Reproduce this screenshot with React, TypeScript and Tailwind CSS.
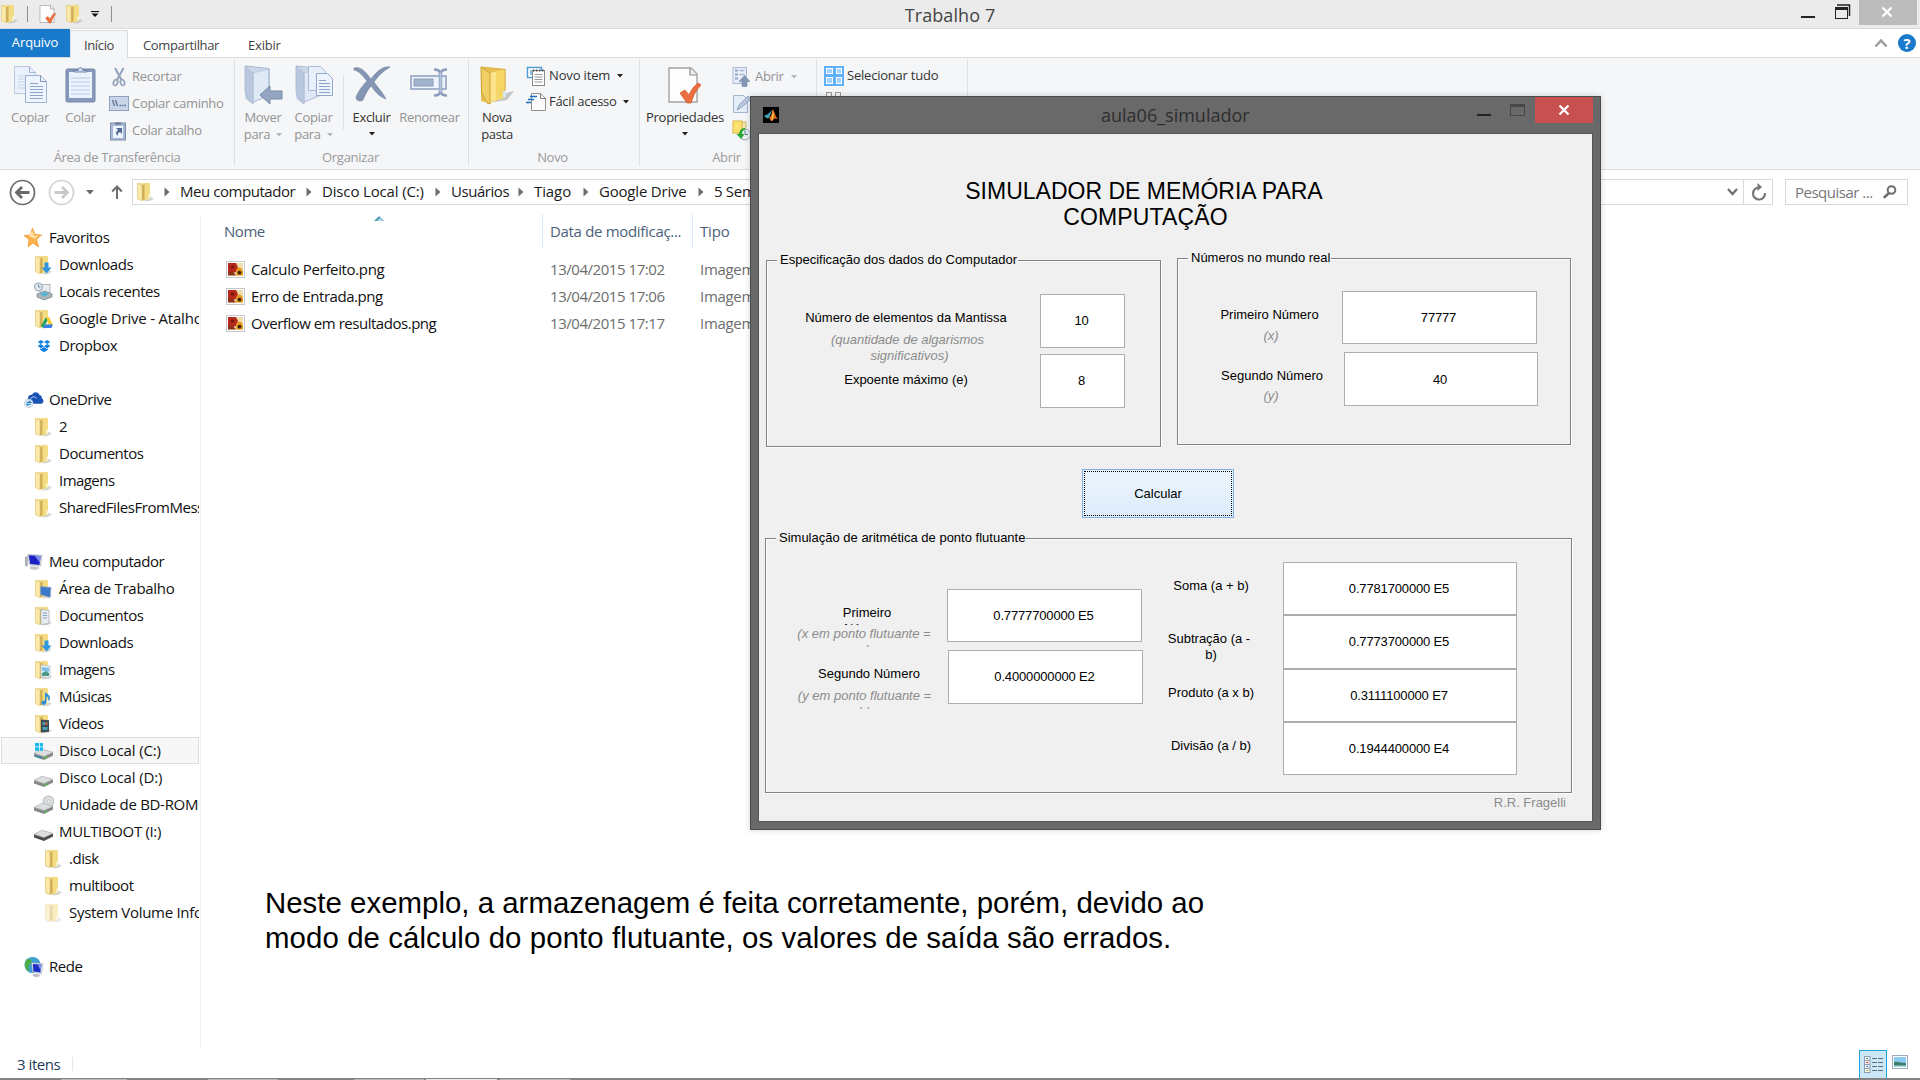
import type { ReactNode } from "react";

/* ---------- icons ---------- */

function Folder({ faded = false, children }: { faded?: boolean; children?: ReactNode }) {
  return (
    <svg width="20" height="20" viewBox="0 0 20 20" className={faded ? "opacity-50" : ""}>
      <path d="M13 14l5 2.500-4 2.500-6 .5z" fill="#b9b9b4" opacity=".6" />
      <path d="M1.500 1.200 12 .8l2 .8v14.800l-7 2.200-5.500-1.600z" fill="#f3dc8c" />
      <path d="M6 3.200 9.500 2.300v15.300L6 18.600z" fill="#cfae56" />
      <path d="M8.500 2.500 13.800 1.500v15.200l-5.300 1.500z" fill="#f4dc83" />
      <path d="M1.500 1.200 6 3v15.800l-4.500-2z" fill="#f9e9aa" stroke="#dfc373" strokeWidth=".6" />
      <path d="M12.300 12.500h2v3.700l-2 .6z" fill="#f9f3d8" />
      {children}
    </svg>
  );
}

function BigFolder() {
  return (
    <svg width="38" height="40" viewBox="0 0 38 40">
      <path d="M20 30 36 26l-7 9-13 2z" fill="#8a8a8a" opacity=".45" />
      <path d="M3 2 27 4.500v28L12 38 3 36z" fill="#e6c050" />
      <path d="M12 8 27 4.500v28l-15 5z" fill="#fbe48c" />
      <path d="M18 6.500 26 5v27l-8 3z" fill="#f5d565" />
      <path d="M3 2l9 6v31l-3-1L3.500 27z" fill="#f0cf66" stroke="#cfa030" strokeWidth="1" />
      <path d="M3 2 27 4.500v28" fill="none" stroke="#d9ac3c" strokeWidth="1.200" />
      <path d="M25 26h3v6l-3 1z" fill="#d7e6ef" />
    </svg>
  );
}

function PaleFolder({ children }: { children?: ReactNode }) {
  return (
    <svg width="40" height="40" viewBox="0 0 40 40">
      <path d="M2 1 27 4v27L10 38 2 34z" fill="#ccd7e8" />
      <path d="M10 8 26 4v26l-16 7z" fill="#dfe8f5" stroke="#b4c3da" strokeWidth=".8" />
      <path d="M2 1l8 7v31l-4-3L2 27z" fill="#b9c8de" stroke="#a7b7d0" strokeWidth=".8" />
      <path d="M2 1 26 3.500V30" fill="none" stroke="#a7b7d0" />
      {children}
    </svg>
  );
}

function CheckPage({ size = 40 }: { size?: number }) {
  return (
    <svg width={size} height={size} viewBox="0 0 40 40">
      <path d="M4 3h22l6 6v28H4z" fill="#fdfdfd" stroke="#a3a3a3" strokeWidth="1.400" />
      <path d="M25 3v7h7" fill="#eee" stroke="#8f8f8f" strokeWidth="1.200" />
      <path d="M15 28l5-3 4 5c2-5 5-9 9-12l3 2c-5 5-8 11-10 18h-4z" fill="#ea7040" stroke="#d05a2c" strokeWidth=".8" />
    </svg>
  );
}

function CopyIcon() {
  return (
    <svg width="36" height="40" viewBox="0 0 36 40" className="ml-0.5">
      <path d="M1.500 1.500h15l6 6v21h-21z" fill="#e9f1fc" stroke="#b9c9e2" />
      <path d="M16.500 1.500v6h6" fill="none" stroke="#a4b6d3" />
      <path d="M5 11h8M5 14h8M5 17h8M5 20h8M5 23h8" stroke="#c6d3e8" />
      <path d="M12.500 10.500h15l6 6v21h-21z" fill="#edf4fe" stroke="#9fb2d1" />
      <path d="M27.500 10.500v6h6" fill="none" stroke="#7f95b9" />
      <path d="M17 18.500h8M17 21.500h13M17 24.500h13M17 27.500h13M17 30.500h13M17 33.500h13" stroke="#8fa4c8" />
    </svg>
  );
}

function PasteIcon() {
  return (
    <svg width="34" height="40" viewBox="0 0 34 40">
      <rect x="2" y="4" width="29" height="33" rx="1.500" fill="#8699ba" stroke="#7487aa" />
      <rect x="5" y="7" width="23" height="26" fill="#eaf2fd" />
      <path d="M7 13h19M7 17h19M7 21h19M7 25h19M7 29h19" stroke="#b9c9e2" />
      <path d="M10 7V5.500h4c0-2 1-3 2.500-3s2.500 1 2.500 3h4V7z" fill="#cbd7ea" stroke="#7487aa" />
    </svg>
  );
}

function ScissorsIcon() {
  return (
    <svg width="20" height="20" viewBox="0 0 20 20" fill="none" stroke="#92a3be">
      <path d="M6 1l6.500 12M14.500 1 8 13" strokeWidth="2" />
      <ellipse cx="6.500" cy="15.500" rx="2" ry="3" strokeWidth="1.700" transform="rotate(20 6.500 15.500)" />
      <ellipse cx="13.500" cy="15.500" rx="2" ry="3" strokeWidth="1.700" transform="rotate(-20 13.500 15.500)" />
    </svg>
  );
}

function PathIcon() {
  return (
    <svg width="20" height="16" viewBox="0 0 20 16">
      <rect x=".5" y=".5" width="19" height="14" fill="#cad6e8" stroke="#8ea1c0" />
      <path d="M3.500 4l2 6M6.500 4l2 6" stroke="#576c90" strokeWidth="1.200" />
      <path d="M10.500 9.500h1.500M13 9.500h1.500M15.500 9.500h1.500" stroke="#576c90" strokeWidth="1.500" />
    </svg>
  );
}

function ShortcutPasteIcon() {
  return (
    <svg width="20" height="20" viewBox="0 0 20 20">
      <rect x="1.500" y="2" width="15" height="17" fill="#a9b8d2" stroke="#7d90b2" />
      <rect x="4" y="5" width="10" height="12" fill="#eef4fd" />
      <path d="M6 2.500h6" stroke="#62779c" strokeWidth="2" />
      <path d="M7 7h6v6l-2-2c-2 1-2.500 2-2.500 4-2-2-2-4 .5-6z" fill="#53698f" />
    </svg>
  );
}

function DeleteIcon() {
  return (
    <svg width="40" height="38" viewBox="0 0 40 38">
      <path d="M2 3c8-2 12 5 17 11C25 6 31 1 38 2 31 6 26 11 22 17c5 7 9 11 12 17-8-3-11-8-15-13-4 5-6 9-8 14-3 2-7 1-7-3 3-7 7-12 11-16C11 11 7 6 2 5z" fill="#8496b4" stroke="#72849f" strokeWidth=".6" />
    </svg>
  );
}

function RenameIcon() {
  return (
    <svg width="40" height="36" viewBox="0 0 40 36">
      <rect x="1" y="11" width="35" height="13" fill="#eef4fd" stroke="#8a9dbd" strokeWidth="1.500" />
      <rect x="4" y="14" width="19" height="7" fill="#a3b2cc" stroke="#8a9dbd" />
      <path d="M24 4.500c4 0 6 1 6 4v18c0 3-2 4-6 4M37 4.500c-4 0-6 1-6 4v18c0 3 2 4 6 4" fill="none" stroke="#8a9dbd" strokeWidth="2.500" />
      <path d="M30.500 7.500v20" stroke="#b5c3db" strokeWidth="2" />
    </svg>
  );
}

function NewItemIcon() {
  return (
    <svg width="20" height="20" viewBox="0 0 20 20">
      <rect x="1.500" y="1.500" width="14" height="10" fill="#fff" stroke="#4a9ad4" strokeWidth="1.400" />
      <path d="M4 4h5v5H4z" fill="#8cc4ea" />
      <rect x="6.500" y="4.500" width="12" height="15" fill="#fff" stroke="#8a8a8a" />
      <path d="M7 4.500h11" stroke="#555" strokeDasharray="1.500 1.500" strokeWidth="2" />
      <path d="M8.500 8.500h8M8.500 11h8M8.500 13.500h8M8.500 16h8" stroke="#999" />
    </svg>
  );
}

function EasyAccessIcon() {
  return (
    <svg width="21" height="20" viewBox="0 0 21 20">
      <path d="M5.500 1.500h9l5 5v12h-14z" fill="#fbfbfb" stroke="#909090" />
      <path d="M14.500 1.500v5h5" fill="none" stroke="#808080" />
      <path d="M4 4.500h7M2 7.500h6M0 10.500h5" stroke="#1f6fc0" strokeWidth="1.500" />
    </svg>
  );
}

function OpenIcon() {
  return (
    <svg width="20" height="21" viewBox="0 0 20 21">
      <rect x="1" y="1.500" width="13.500" height="16" fill="#e9eff8" stroke="#a9b9d4" />
      <path d="M3 4.500h3M3 8.500h3M3 12.500h3" stroke="#8fa3c6" strokeWidth="2" />
      <path d="M7.500 4.500h5M7.500 8.500h5" stroke="#a9b9d4" strokeWidth="1.500" />
      <path d="M12.500 9.500l5.500 6h-3v5h-5v-5H7z" fill="#8496b6" stroke="#7286a8" strokeWidth=".6" />
    </svg>
  );
}

function EditIcon() {
  return (
    <svg width="20" height="20" viewBox="0 0 20 20">
      <path d="M1.500 1.500h10l4 4v13h-14z" fill="#e4ecf8" stroke="#a4b5d2" />
      <path d="M5 16l2-5 9-9 3 3-9 8z" fill="#b9c8df" stroke="#8598ba" strokeWidth=".8" />
    </svg>
  );
}

function HistoryIcon() {
  return (
    <svg width="20" height="21" viewBox="0 0 20 21">
      <rect x="6" y="2" width="8" height="11" fill="#f2e6b0" stroke="#d0b968" />
      <rect x="1" y="1" width="9" height="12" fill="#fbe26f" stroke="#d9b540" />
      <circle cx="13" cy="14.500" r="5.500" fill="#e9eef2" stroke="#96a5b0" />
      <path d="M13 10.500v4h3" fill="none" stroke="#5a7a8a" />
      <path d="M13 8c-4 0-6 3-5.500 6H4.500l4.500 5 3.500-5H10c0-2 1-4 3-4z" fill="#27a82f" />
    </svg>
  );
}

function SelectAllIcon() {
  return (
    <div className="grid size-5 shrink-0 grid-cols-2 gap-[3px] bg-[#61b0fb] p-0.5">
      {[0, 1, 2, 3].map((k) => (
        <div key={k} className="border border-white bg-[#a5d2fc]" />
      ))}
    </div>
  );
}

function DriveIcon({ kind = "plain" }: { kind?: "plain" | "win" | "disc" | "dark" }) {
  return (
    <svg width="20" height="20" viewBox="0 0 20 20">
      {kind === "disc" && <circle cx="14.500" cy="6.500" r="5.500" fill="#d9dde0" stroke="#a8a8a8" strokeWidth=".8" />}
      {kind === "disc" && <circle cx="14.500" cy="6.500" r="1.500" fill="#fff" stroke="#999" strokeWidth=".5" />}
      <path d="M0 12.500 8 8.500l11 3v3L10 19 0 15.500z" fill={kind === "dark" ? "#4c4c4c" : "#85898a"} />
      <path d="M0 12.300 8 8.200l11 3.100-9 4.200z" fill="#dcdedf" stroke="#a9acad" strokeWidth=".6" />
      {kind !== "dark" && <path d="M10.500 16l2.500-1v2l-2.500 1z" fill="#4cbc3c" />}
      {kind === "win" && <path d="M1 14l7 2.500V18l-7-2.500z" fill="#2b84a8" />}
      {kind === "win" && <path d="M1 2h4v3.500H1zM5.800 2H9v3.500H5.800zM1 6.300h4v3.500H1zM5.800 6.300H9v3.500H5.800z" fill="#17b9f0" />}
    </svg>
  );
}

function StarIcon() {
  return (
    <svg width="20" height="20" viewBox="0 0 20 20">
      <path d="M8.500 0l2.500 6.500 6.500.500-5 4.500 2 7.500L9 15l-5 4 1-7.500L0 7.500l6.500-.500z" fill="#fbb04a" stroke="#e9932c" strokeWidth=".7" />
      <path d="M8.500 2.500l1.700 5 4.500.300-3.700 3-6-2.500z" fill="#fde0a0" />
    </svg>
  );
}

function RecentIcon() {
  return (
    <svg width="20" height="20" viewBox="0 0 20 20">
      <rect x="6" y="2.500" width="10" height="8" fill="#e8edf0" stroke="#9aa8b0" strokeWidth=".8" />
      <path d="M3 12l8-3 7 3v3l-8 3-7-3z" fill="#a9b4bb" stroke="#76848e" strokeWidth=".7" />
      <path d="M6 12l5-2 4 2-5 2.500z" fill="#52b3d6" />
      <circle cx="4.500" cy="5" r="4" fill="#dfe9ef" stroke="#8ea3b2" />
      <path d="M4.500 2.500V5h2" fill="none" stroke="#5a7286" strokeWidth=".8" />
    </svg>
  );
}

function DropboxIcon() {
  return (
    <svg width="20" height="20" viewBox="0 0 20 20" fill="#1081de">
      <path d="M7 4l3 2-3.300 2.100L3.700 6zM13 4l3.300 2-3 2.100L10 6zM3.700 10l3-2L10 10.200l-3 2zM13.300 8l3 2-3.300 2.200-3-2zM6 12.500l1 .6 3-2 3 2 1-.6v1.200l-4 2.500-4-2.500z" />
    </svg>
  );
}

function OneDriveIcon() {
  return (
    <svg width="21" height="20" viewBox="0 0 21 20">
      <path d="M4 9c0-3 2-5 4.500-4.500C10 1 15 1 16.500 5c2 0 2.500 2 2.200 3.500C21 9 21 14 18 14H5c-3 0-3.500-4-1-5z" fill="#1853b5" />
      <path d="M7 9c1-3 5-3 6-.5" fill="none" stroke="#fff" strokeWidth=".8" />
      <circle cx="5" cy="13.500" r="4.500" fill="#dceaf3" stroke="#a9bccb" strokeWidth=".6" />
      <path d="M3 12.500h4l-1.500-1.500M7 14.500H3L4.500 16" fill="none" stroke="#1e7fcb" strokeWidth="1.200" />
    </svg>
  );
}

function ComputerIcon() {
  return (
    <svg width="21" height="20" viewBox="0 0 21 20">
      <path d="M1 5l3-1.500V15l-3-1z" fill="#aab1b6" />
      <path d="M4 2l15 .8-1.500 11.500L5.500 13z" fill="#dcdfe4" stroke="#a9adb5" strokeWidth=".6" />
      <path d="M5 3l12.500.6-1.200 9.500L6.500 12z" fill="#1820c4" />
      <path d="M11 3.300l6.500.300-1 7z" fill="#7d8cf0" />
      <path d="M7 14.500l8 .5 1 2-5 1.500-5-1.500z" fill="#c4c7cb" />
    </svg>
  );
}

function NetworkIcon() {
  return (
    <svg width="21" height="22" viewBox="0 0 21 22">
      <circle cx="9" cy="9" r="8.500" fill="#3d9fd2" />
      <path d="M3 3c3-1 6 0 5 3S4 9 5 12s0 4-1 3C0 11 0 6 3 3z" fill="#4aae45" />
      <path d="M8 6.500l12 .8-1.500 11L9 16.500z" fill="#e0e3e8" stroke="#a4a9b3" strokeWidth=".5" />
      <path d="M9.300 7.800l9 .6-1.100 8.300-7.400-1z" fill="#1c2ec4" />
      <path d="M14 8.100l4.300.3-.8 6z" fill="#7d8cf0" />
      <path d="M10 18l6 1 1 1.500-4 1.200-4-1.500z" fill="#b9bcc1" />
    </svg>
  );
}

function ImageFileIcon() {
  return (
    <svg width="19" height="17" viewBox="0 0 19 17">
      <rect x=".5" y=".5" width="18" height="16" fill="#fff" stroke="#c4c8cb" />
      <rect x="2" y="2" width="15" height="12.500" fill="#f0dfae" />
      <path d="M2 2h8l2 4-2 5-3 1-5-1z" fill="#b5281a" />
      <path d="M2 10.500 7 11l3 3.500H2z" fill="#8c3418" />
      <circle cx="6.500" cy="6" r="1.600" fill="#6a1a0c" />
      <path d="M10.500 8.500l1.500-2 3 .5 2 2.500v5h-7z" fill="#e3991f" />
      <circle cx="13.500" cy="11.700" r="1.900" fill="#3a220c" />
    </svg>
  );
}

function MatlabIcon() {
  return (
    <svg width="16" height="16" viewBox="0 0 16 16" className="bg-black">
      <path d="M1 9l4-2 4-4-3 8-2 .5z" fill="#3e9fb5" />
      <path d="M9.500 2c2 2 3 8 5.500 10-2-.5-3-1-4 0s-2 3-3 2-1-2.500-2-3c2-2 3-4 3.500-9z" fill="#e2601c" />
      <path d="M10 3c1 4 1 6 0 9l-2 2 1-5z" fill="#f7c64a" />
    </svg>
  );
}

function CloseGlyph() {
  return (
    <svg width="12" height="10" viewBox="0 0 12 10">
      <path d="M1.500.5 10.500 9.500M10.500.5 1.500 9.500" stroke="#fff" strokeWidth="2.200" />
    </svg>
  );
}

function Caret({ muted = false }: { muted?: boolean }) {
  return (
    <svg width="6" height="4" viewBox="0 0 6 4" className="shrink-0">
      <path d="M0 0h6L3 3.500z" fill={muted ? "#b4b7ba" : "#222"} />
    </svg>
  );
}

/* ---------- explorer ---------- */

function TitleBar() {
  return (
    <div className="relative flex h-[29px] shrink-0 border-b border-[#d9dadb] bg-[#ebebeb]">
      <div className="flex h-7 items-center">
        <Folder />
        <div className="ml-[7px] h-4 w-px bg-[#8f8f8f]" />
        <div className="ml-2.5">
          <CheckPage size={20} />
        </div>
        <div className="ml-[7px]">
          <Folder />
        </div>
        <svg width="8" height="6" viewBox="0 0 8 6" className="ml-1.5">
          <path d="M0 .5h8" stroke="#111" strokeWidth="1.200" />
          <path d="M.5 2.500h7L4 6z" fill="#111" />
        </svg>
        <div className="ml-3 h-4 w-px bg-[#8f8f8f]" />
      </div>
      <div className="absolute inset-x-0 top-0 flex h-7 justify-center pr-5 pt-0.5 text-[18px] leading-[26px] tracking-[0.1px] text-[#444]">
        Trabalho 7
      </div>
      <div className="ml-auto flex items-start pr-[3px]">
        <div className="mt-4 h-0.5 w-3.5 bg-[#222]" />
        <svg width="16" height="16" viewBox="0 0 16 16" className="ml-5 mr-2 mt-1">
          <path d="M2 1h12.500v11" fill="none" stroke="#222" strokeWidth="1.500" />
          <rect x=".5" y="3.500" width="12" height="11" fill="#ebebeb" stroke="#222" />
          <path d="M0 4.500h13" stroke="#222" strokeWidth="3" />
        </svg>
        <div className="flex h-[25px] w-[58px] items-center justify-center bg-[#bcbcbc] pb-0.5 pr-0.5">
          <CloseGlyph />
        </div>
      </div>
    </div>
  );
}

function TabRow() {
  return (
    <div className="flex h-[29px] shrink-0 border-b border-[#dadbdc] text-[13px] tracking-[-0.35px] text-[#444]">
      <div className="flex w-[70px] items-center justify-center bg-[#1979ca] tracking-[-0.1px] text-white">Arquivo</div>
      <div className="-mb-px mt-px flex w-[58px] items-center justify-center border-x border-t border-[#dadbdc] bg-[#f5f6f7] pt-[3px]">
        Início
      </div>
      <div className="ml-[15px] flex w-[105px] items-center pt-[5px]">Compartilhar</div>
      <div className="flex items-center pt-[5px] tracking-[-0.2px]">Exibir</div>
      <svg width="14" height="10" viewBox="0 0 14 10" className="ml-auto mt-[9px]">
        <path d="M1.500 8.500 7 2.500l5.500 6" fill="none" stroke="#9b9b9b" strokeWidth="2.500" />
      </svg>
      <div className="ml-2.5 mr-1 mt-[5px] flex size-[18px] items-center justify-center rounded-full bg-[#1979ca] text-[15px] font-bold leading-none tracking-normal text-white">
        ?
      </div>
    </div>
  );
}

function BigButton({
  icon,
  lines,
  w,
  muted = true,
  caret = false,
}: {
  icon: ReactNode;
  lines: string[];
  w: string;
  muted?: boolean;
  caret?: boolean;
}) {
  return (
    <div className={`flex flex-col items-center ${w} ${muted ? "text-[#929395]" : "text-[#333]"}`}>
      <div className="flex h-[49px] items-start pt-[5px]">{icon}</div>
      {lines.map((l, i) => (
        <div key={l} className="flex h-[17px] items-center gap-1.5 whitespace-nowrap">
          {l}
          {caret && i > 0 && <Caret muted />}
        </div>
      ))}
      {caret && lines.length === 1 && (
        <div className="pt-1.5">
          <Caret />
        </div>
      )}
    </div>
  );
}

function SmallButton({ icon, label, muted = false, caret = false }: { icon: ReactNode; label: string; muted?: boolean; caret?: boolean }) {
  return (
    <div className={`flex h-[27px] items-center whitespace-nowrap ${muted ? "text-[#929395]" : "text-[#333]"}`}>
      <div className="flex w-[23px] shrink-0">{icon}</div>
      {label}
      {caret && (
        <div className="ml-[7px]">
          <Caret muted={muted} />
        </div>
      )}
    </div>
  );
}

function Group({ w, label, children, labelClass = "" }: { w: string; label: string; children: ReactNode; labelClass?: string }) {
  return (
    <div className={`flex h-[106px] shrink-0 flex-col border-r border-[#dfe0e2] ${w}`}>
      <div className="flex h-[90px]">{children}</div>
      <div className={`text-center leading-[18px] text-[#999a9c] ${labelClass}`}>{label}</div>
    </div>
  );
}

function Ribbon() {
  return (
    <div className="flex h-[112px] shrink-0 border-b border-[#d9dadc] bg-[#f5f6f7] pt-0.5 text-[13px] tracking-[-0.3px]">
      <Group w="w-[235px]" label="Área de Transferência">
        <BigButton w="w-[60px]" icon={<CopyIcon />} lines={["Copiar"]} />
        <BigButton w="w-[41px]" icon={<PasteIcon />} lines={["Colar"]} />
        <div className="ml-2 pt-[3px]">
          <SmallButton muted icon={<ScissorsIcon />} label="Recortar" />
          <SmallButton muted icon={<PathIcon />} label="Copiar caminho" />
          <SmallButton muted icon={<ShortcutPasteIcon />} label="Colar atalho" />
        </div>
      </Group>
      <Group w="w-[234px]" label="Organizar" labelClass="pr-0.5">
        <BigButton
          w="w-[56px]"
          icon={
            <PaleFolder>
              <path d="M17 30l10-9v5h12v8H27v5z" fill="#94a5c1" stroke="#7488a9" />
            </PaleFolder>
          }
          lines={["Mover", "para"]}
          caret
        />
        <BigButton
          w="w-[45px]"
          icon={
            <PaleFolder>
              <path d="M14.500 1.500h12l5 5v19h-17z" fill="#e8f0fb" stroke="#a9bad5" />
              <path d="M22.500 8.500h11l5 5v17h-16z" fill="#edf4fe" stroke="#93a8cb" />
              <path d="M25 15.500h7M25 18.500h11M25 21.500h11M25 24.500h11M25 27.500h11" stroke="#8fa4c8" />
            </PaleFolder>
          }
          lines={["Copiar", "para"]}
          caret
        />
        <div className="ml-[7px] mt-[15px] h-[55px] w-px bg-[#dfe0e2]" />
        <BigButton w="w-[55px]" muted={false} icon={<DeleteIcon />} lines={["Excluir"]} caret />
        <BigButton w="w-[61px]" icon={<RenameIcon />} lines={["Renomear"]} />
      </Group>
      <Group w="w-[171px]" label="Novo" labelClass="pr-[3px]">
        <BigButton w="w-[56px]" muted={false} icon={<BigFolder />} lines={["Nova", "pasta"]} />
        <div className="ml-px flex flex-col pt-0.5">
          <div className="h-[26px] tracking-[-0.15px]">
            <SmallButton icon={<NewItemIcon />} label="Novo item" caret />
          </div>
          <SmallButton icon={<EasyAccessIcon />} label="Fácil acesso" caret />
        </div>
      </Group>
      <Group w="w-[177px]" label="Abrir" labelClass="pr-[3px]">
        <BigButton w="w-[90px]" muted={false} icon={<CheckPage />} lines={["Propriedades"]} caret />
        <div className="ml-0.5 pt-[3px]">
          <SmallButton muted icon={<OpenIcon />} label="Abrir" caret />
          <SmallButton muted icon={<EditIcon />} label="Editar" />
          <SmallButton muted icon={<HistoryIcon />} label="Histórico" />
        </div>
      </Group>
      <Group w="w-[151px]" label="Selecionar">
        <div className="ml-[7px] pt-0.5 tracking-[-0.22px]">
          <SmallButton icon={<SelectAllIcon />} label="Selecionar tudo" />
          <div className="ml-0.5 mt-[3px] flex gap-[3px]">
            <div className="size-1.5 border border-[#999]" />
            <div className="size-1.5 border border-[#999]" />
          </div>
        </div>
      </Group>
    </div>
  );
}

const crumbs = [
  { t: "Meu computador", c: "w-[142px] tracking-[-0.45px]" },
  { t: "Disco Local (C:)", c: "w-[129px] tracking-[-0.15px]" },
  { t: "Usuários", c: "w-[83px] tracking-[-0.45px]" },
  { t: "Tiago", c: "w-[65px] tracking-[-0.1px]" },
  { t: "Google Drive", c: "w-[115px] tracking-[-0.2px]" },
  { t: "5 Semestre", c: "w-[115px] tracking-[-0.3px]" },
];

function Triangle() {
  return (
    <svg width="6" height="10" viewBox="0 0 6 10" className="shrink-0">
      <path d="M.5.5 5.500 5 .5 9.500z" fill="#6d6d6d" />
    </svg>
  );
}

function NavCircle({ color, arrow, flip = false }: { color: string; arrow: string; flip?: boolean }) {
  return (
    <svg width="27" height="27" viewBox="0 0 27 27" className={flip ? "-scale-x-100" : ""}>
      <circle cx="13.500" cy="13.500" r="12" fill="none" stroke={color} strokeWidth="1.700" />
      <path d="M20.500 13.500H8M13 8l-5.500 5.500L13 19" fill="none" stroke={arrow} strokeWidth="2.800" />
    </svg>
  );
}

function AddressRow() {
  return (
    <div className="flex h-[44px] shrink-0 items-center pl-[9px] pr-3 text-[15px] text-[#1a1a1a]">
      <NavCircle color="#6a6a6a" arrow="#6a6a6a" />
      <div className="ml-3 flex">
        <NavCircle color="#d2d2d2" arrow="#c9c9c9" flip />
      </div>
      <svg width="8" height="5" viewBox="0 0 8 5" className="ml-[11px]">
        <path d="M0 0h8L4 4.500z" fill="#6d6d6d" />
      </svg>
      <svg width="12" height="14" viewBox="0 0 12 14" className="ml-[17px]">
        <path d="M6 14V2M1.200 6.500 6 1.500l4.800 5" fill="none" stroke="#6d6d6d" strokeWidth="2" />
      </svg>
      <div className="ml-[9px] flex h-[26px] w-[1641px] items-center border border-[#d9d9d9] pl-[3px]">
        <Folder />
        <div className="ml-[8px] mr-[10px] flex">
          <Triangle />
        </div>
        {crumbs.map((c, i) => (
          <div key={c.t} className={`flex shrink-0 items-center justify-between whitespace-nowrap ${c.c}`}>
            <span className="pb-0.5">{c.t}</span>
            {i < crumbs.length - 1 && (
              <div className="mr-2.5 flex">
                <Triangle />
              </div>
            )}
          </div>
        ))}
        <svg width="11" height="8" viewBox="0 0 11 8" className="ml-auto mr-[5px]">
          <path d="M1 1l4.500 5L10 1" fill="none" stroke="#6d6d6d" strokeWidth="2.200" />
        </svg>
        <div className="flex h-full w-[29px] items-center justify-center border-l border-[#d9d9d9] pl-px">
          <svg width="16" height="18" viewBox="0 0 16 18">
            <path d="M8 4.500A6 6 0 1 0 14 10" fill="none" stroke="#777" strokeWidth="2.200" />
            <path d="M6.500 0 11 4 6.500 8z" fill="#777" />
          </svg>
        </div>
      </div>
      <div className="ml-auto flex h-[26px] w-[123px] items-center justify-between border border-[#d9d9d9] pl-[9px] pr-[10px] tracking-[-0.5px] text-[#777]">
        Pesquisar ...
        <svg width="14" height="14" viewBox="0 0 14 14">
          <circle cx="8.500" cy="5" r="3.800" fill="none" stroke="#6d6d6d" strokeWidth="2" />
          <path d="M6 8 .8 12.800" stroke="#6d6d6d" strokeWidth="2.500" />
        </svg>
      </div>
    </div>
  );
}

const downArrow = <path d="M10.500 7.500h4v5h3l-5 6-5-6h3z" fill="#2f96dc" />;

type NavItem = { label: string; level: number; icon: ReactNode; selected?: boolean; tracking?: string } | null;

const nav: NavItem[] = [
  { label: "Favoritos", level: 0, icon: <StarIcon />, tracking: "tracking-[-0.4px]" },
  { label: "Downloads", level: 1, icon: <Folder>{downArrow}</Folder> },
  { label: "Locais recentes", level: 1, icon: <RecentIcon /> },
  {
    label: "Google Drive - Atalho",
    level: 1,
    icon: (
      <Folder>
        <path d="M12 8l-5 9 2 2 5-8z" fill="#1fa463" />
        <path d="M12 8h3l4 8h-4z" fill="#fbcb2e" />
        <path d="M9 19l2-3.500h8L17.500 19z" fill="#3a7ee8" />
      </Folder>
    ),
    tracking: "tracking-[-0.2px]",
  },
  { label: "Dropbox", level: 1, icon: <DropboxIcon /> },
  null,
  { label: "OneDrive", level: 0, icon: <OneDriveIcon /> },
  { label: "2", level: 1, icon: <Folder /> },
  { label: "Documentos", level: 1, icon: <Folder />, tracking: "tracking-[-0.5px]" },
  { label: "Imagens", level: 1, icon: <Folder />, tracking: "tracking-[-0.55px]" },
  { label: "SharedFilesFromMessenger", level: 1, icon: <Folder /> },
  null,
  { label: "Meu computador", level: 0, icon: <ComputerIcon /> },
  {
    label: "Área de Trabalho",
    level: 1,
    icon: (
      <Folder>
        <path d="M6.500 7.500 17 8.500l-1 10-9.500-3z" fill="#3a78c8" stroke="#8fa3bd" strokeWidth=".8" />
      </Folder>
    ),
    tracking: "tracking-[-0.28px]",
  },
  {
    label: "Documentos",
    level: 1,
    icon: (
      <Folder>
        <path d="M7 3.500l8 .8v13.200l-8 1z" fill="#e9edf2" stroke="#aab3bd" strokeWidth=".8" />
        <path d="M9 7h4M9 9.500h4M9 12h4" stroke="#7d9cc4" />
      </Folder>
    ),
    tracking: "tracking-[-0.5px]",
  },
  { label: "Downloads", level: 1, icon: <Folder>{downArrow}</Folder> },
  {
    label: "Imagens",
    level: 1,
    icon: (
      <Folder>
        <path d="M7 5l9 1v12l-9-1z" fill="#f2f5f8" stroke="#b4bcc4" strokeWidth=".8" />
        <path d="M8 7l7 .8v4L8 11z" fill="#7cc0e6" />
        <path d="M8 13l4-2 3 2v3H8z" fill="#4b9a88" />
      </Folder>
    ),
    tracking: "tracking-[-0.55px]",
  },
  {
    label: "Músicas",
    level: 1,
    icon: (
      <Folder>
        <path d="M11 5c2 2 5 3 5 6s-2 3-2 2c1-3-.5-3-1.500-3.500V15c0 3-5 4-5 1.500S9 13 11 13.500z" fill="#2f8fd6" />
      </Folder>
    ),
    tracking: "tracking-[-0.55px]",
  },
  {
    label: "Vídeos",
    level: 1,
    icon: (
      <Folder>
        <path d="M7 5.500l8 .8v11.500l-8 .7z" fill="#3b4b55" />
        <path d="M8.500 8l5 .4v2.600h-5zM8.500 13h5v3h-5z" fill="#4aa3b5" />
        <path d="M11 8.200l2.500.200v2.600L11 11z" fill="#b4583a" />
      </Folder>
    ),
    tracking: "tracking-[-0.3px]",
  },
  { label: "Disco Local (C:)", level: 1, icon: <DriveIcon kind="win" />, selected: true, tracking: "tracking-[-0.15px]" },
  { label: "Disco Local (D:)", level: 1, icon: <DriveIcon />, tracking: "tracking-[-0.15px]" },
  { label: "Unidade de BD-ROM", level: 1, icon: <DriveIcon kind="disc" />, tracking: "tracking-[-0.3px]" },
  { label: "MULTIBOOT (I:)", level: 1, icon: <DriveIcon kind="dark" />, tracking: "tracking-[-0.35px]" },
  { label: ".disk", level: 2, icon: <Folder /> },
  { label: "multiboot", level: 2, icon: <Folder /> },
  { label: "System Volume Information", level: 2, icon: <Folder faded />, tracking: "tracking-[-0.3px]" },
  null,
  { label: "Rede", level: 0, icon: <NetworkIcon /> },
];

const indent = ["pl-[23px]", "pl-[33px]", "pl-[43px]"];

function Sidebar() {
  return (
    <div className="flex w-[201px] shrink-0 flex-col border-r border-[#f3f3f3] px-px pt-2.5 text-[15px] text-[#111]">
      {nav.map((n, i) =>
        n ? (
          <div
            key={i}
            className={`flex h-[27px] w-[198px] items-center overflow-hidden whitespace-nowrap ${
              n.selected ? "bg-[#f7f7f7] outline outline-1 -outline-offset-1 outline-[#dedede]" : ""
            } ${indent[n.level]} ${n.tracking ?? "tracking-[-0.45px]"}`}
          >
            <div className="mr-[5px] flex w-5 shrink-0">{n.icon}</div>
            {n.label}
          </div>
        ) : (
          <div key={i} className="h-[27px]" />
        ),
      )}
    </div>
  );
}

const files = [
  { name: "Calculo Perfeito.png", date: "13/04/2015 17:02", c: "tracking-[-0.35px]" },
  { name: "Erro de Entrada.png", date: "13/04/2015 17:06", c: "tracking-[-0.45px]" },
  { name: "Overflow em resultados.png", date: "13/04/2015 17:17", c: "tracking-[-0.47px]" },
];

function FileList() {
  return (
    <div className="relative flex flex-1 flex-col text-[15px] tracking-[-0.45px]">
      <svg width="10" height="6" viewBox="0 0 10 6" className="absolute left-[173px] top-0.5">
        <path d="M0 5 5 0l5 5z" fill="#5b97b8" />
        <path d="M3 5l3-3 3 3z" fill="#a9dcf2" />
      </svg>
      <div className="flex h-[35px] text-[#4c607a]">
        <div className="flex w-[342px] items-center border-r border-[#dcebf7] pl-[23px]">Nome</div>
        <div className="flex w-[150px] items-center border-r border-[#dcebf7] pl-[7px] tracking-[-0.32px]">Data de modificaç...</div>
        <div className="flex items-center pl-[7px] tracking-[-0.2px]">Tipo</div>
      </div>
      <div className="flex flex-col pt-[7px]">
        {files.map((f) => (
          <div key={f.name} className="flex h-[27px] items-center text-[#6d6d6d]">
            <div className={`flex w-[349px] items-center gap-1.5 pl-[25px] text-[#111] ${f.c}`}>
              <ImageFileIcon />
              {f.name}
            </div>
            <div className="w-[150px]">{f.date}</div>
            <div className="tracking-[-0.3px]">Imagem PNG</div>
          </div>
        ))}
      </div>
      <p className="ml-16 mt-[548px] w-[1000px] font-['Liberation_Sans',Arial,sans-serif] text-[29.4px] leading-[35px] tracking-[0.02px] text-black">
        Neste exemplo, a armazenagem é feita corretamente, porém, devido ao
        <br />
        <span className="tracking-[0.09px]">modo de cálculo do ponto flutuante, os valores de saída são errados.</span>
      </p>
    </div>
  );
}

function StatusBar() {
  return (
    <div className="flex h-[28px] shrink-0 items-center pl-[17px] pr-3 text-[15px] tracking-[-0.45px] text-[#1e395b]">
      3 itens
      <div className="ml-3 h-3.5 w-px bg-[#e6e6e6]" />
      <div className="ml-auto flex h-[29px] w-7 items-center justify-center border border-[#26a0da] bg-[#cce8f6]">
        <svg width="19" height="17" viewBox="0 0 19 17">
          <rect x=".5" y=".5" width="5.500" height="16" fill="#fff" stroke="#8c9bb0" />
          <path d="M0 4.500h6M0 8.500h6M0 12.500h6" stroke="#8c9bb0" />
          <path d="M2 2.500h2.500" stroke="#6a8f6a" strokeWidth="1.200" />
          <path d="M2 6.500h2.500" stroke="#e0402c" strokeWidth="1.200" />
          <path d="M2 10.500h2.500" stroke="#3c8fd0" strokeWidth="1.200" />
          <path d="M2 14.500h2.500" stroke="#a8b83c" strokeWidth="1.200" />
          <path d="M8 2.500h5M14 2.500h5M8 6.500h5M14 6.500h5M8 10.500h5M14 10.500h5M8 14.500h5M14 14.500h5" stroke="#5a6a80" />
        </svg>
      </div>
      <svg width="16" height="14" viewBox="0 0 16 14" className="mb-1 ml-[5px]">
        <rect x=".5" y=".5" width="15" height="13" fill="#fff" stroke="#9fabc0" />
        <rect x="2" y="2" width="12" height="10" fill="#8ccbf2" />
        <path d="M2 7c4-1 7 1 12 1v4H2z" fill="#3f7f6a" />
        <path d="M2 10.500h12V12H2z" fill="#a8d8ea" />
      </svg>
    </div>
  );
}

function TaskbarEdge() {
  return (
    <div className="flex h-0.5 shrink-0 items-end bg-[#848484]">
      <div className="ml-[61px] h-px w-[66px] bg-[#b8b8b8]" />
      <div className="ml-[81px] h-px w-[70px] bg-[#b8b8b8]" />
      <div className="ml-[76px] h-px w-[70px] bg-[#b8b8b8]" />
      <div className="ml-0.5 h-px w-[71px] bg-[#e8e8e8]" />
      <div className="ml-[3px] h-px w-[70px] bg-[#b8b8b8]" />
    </div>
  );
}

/* ---------- simulator window ---------- */

function Field({ value, className }: { value: string; className: string }) {
  return (
    <div className={`flex items-center justify-center border border-[#abadb3] bg-white pr-0.5 tracking-[-0.15px] ${className}`}>
      {value}
    </div>
  );
}

function Panel({ title, className, children }: { title: string; className: string; children: ReactNode }) {
  return (
    <div
      className={`relative flex border border-[#828282] shadow-[1px_1px_0_#fff,inset_1px_1px_0_#fff] ${className}`}
    >
      <span className="absolute -top-[9px] left-2.5 whitespace-nowrap bg-[#f0f0f0] pl-[3px] pr-px leading-4">{title}</span>
      {children}
    </div>
  );
}

function Simulator() {
  return (
    <div className="absolute left-[750px] top-[96px] flex h-[734px] w-[851px] flex-col border border-[#4c4c4c] bg-[#696969] px-[7px] pb-[7px] shadow-[0_0_6px_rgba(0,0,0,0.18)]">
      <div className="flex h-9 shrink-0 items-start">
        <div className="ml-[5px] mt-2.5">
          <MatlabIcon />
        </div>
        <div className="flex-1 pl-[322px] pt-[5px] text-[18px] leading-[26px] text-[#2e2e2e]">aula06_simulador</div>
        <div className="mt-[17px] h-0.5 w-3.5 bg-[#242424]" />
        <div className="ml-[19px] mr-2.5 mt-[7px] h-3 w-[15px] border border-t-[3px] border-[#484848]" />
        <div className="flex h-[26px] w-[58px] items-center justify-center bg-[#c75050] pb-px pr-px">
          <CloseGlyph />
        </div>
      </div>
      <div className="flex flex-1 flex-col border border-[#555] bg-[#f0f0f0] font-['Liberation_Sans',Arial,sans-serif] text-[13px] leading-4 text-black">
        <h1 className="mt-11 pr-[63px] text-center text-[23px] leading-[26px]">
          SIMULADOR DE MEMÓRIA PARA
          <br />
          <span className="pl-[3px] tracking-[0.15px]">COMPUTAÇÃO</span>
        </h1>

        <div className="mt-[28px] flex pl-[7px]">
          <Panel title="Especificação dos dados do Computador" className="mt-0.5 h-[187px] w-[395px]">
            <div className="ml-[14px] flex w-[250px] flex-col pt-[49px] text-center">
              <div>Número de elementos da Mantissa</div>
              <div className="mt-1.5 pl-[3px] italic text-[#8c8c8c]">
                (quantidade de algarismos
                <br />
                <span className="pl-1">significativos)</span>
              </div>
              <div className="mt-2">Expoente máximo (e)</div>
            </div>
            <div className="ml-[9px] flex flex-col gap-1.5 pt-[33px]">
              <Field value="10" className="h-[54px] w-[85px]" />
              <Field value="8" className="h-[54px] w-[85px]" />
            </div>
          </Panel>
          <Panel title="Números no mundo real" className="ml-4 h-[187px] w-[394px]">
            <div className="ml-[23px] flex w-[140px] flex-col pt-12 text-center">
              <div className="pr-[3px]">Primeiro Número</div>
              <div className="mt-[5px] italic text-[#8c8c8c]">(x)</div>
              <div className="mt-6 pl-0.5">Segundo Número</div>
              <div className="mt-1 italic text-[#8c8c8c]">(y)</div>
            </div>
            <div className="ml-px flex flex-col gap-2 pt-8">
              <Field value="77777" className="h-[53px] w-[195px]" />
              <Field value="40" className="ml-0.5 h-[54px] w-[194px] pt-0.5" />
            </div>
          </Panel>
        </div>

        <div className="ml-[323px] mt-[22px] h-[49px] w-[152px] border border-[#7eb4ea] bg-linear-to-b from-[#ecf4fc] to-[#dcecfc] p-px">
          <div className="flex h-full items-center justify-center border border-dotted border-black">Calcular</div>
        </div>

        <Panel title="Simulação de aritmética de ponto flutuante" className="ml-1.5 mt-5 h-[255px] w-[807px]">
          <div className="ml-[23px] flex w-[150px] flex-col pt-[66px] text-center">
            <div className="h-5 overflow-hidden pl-1.5">
              Primeiro
              <br />
              Número
            </div>
            <div className="mt-px h-[21px] overflow-hidden italic text-[#8c8c8c]">
              (x em ponto flutuante =
              <br />
              a)
            </div>
            <div className="mt-[19px] pl-2.5">Segundo Número</div>
            <div className="mt-1.5 h-[21px] overflow-hidden pl-px italic text-[#8c8c8c]">
              (y em ponto flutuante =
              <br />
              b)
            </div>
          </div>
          <div className="ml-2 flex flex-col gap-2 pt-[50px]">
            <Field value="0.7777700000 E5" className="h-[53px] w-[195px]" />
            <Field value="0.4000000000 E2" className="ml-px h-[54px] w-[195px]" />
          </div>
          <div className="ml-[20px] flex w-[96px] flex-col pt-[39px] text-center">
            <div className="h-[53px]">Soma (a + b)</div>
            <div className="h-[54px]">
              <span className="pr-1">Subtração (a -</span>
              <br />
              b)
            </div>
            <div className="h-[53px]">Produto (a x b)</div>
            <div>Divisão (a / b)</div>
          </div>
          <div className="ml-6 flex flex-col pt-[23px]">
            <Field value="0.7781700000 E5" className="h-[53px] w-[234px]" />
            <Field value="0.7773700000 E5" className="h-[54px] w-[234px]" />
            <Field value="0.3111100000 E7" className="h-[53px] w-[234px]" />
            <Field value="0.1944400000 E4" className="h-[53px] w-[234px]" />
          </div>
        </Panel>
        <div className="mt-0.5 pr-[26px] text-right text-[#8c8c8c]">R.R. Fragelli</div>
      </div>
    </div>
  );
}

export default function App() {
  return (
    <div className="relative flex h-[1080px] w-[1920px] flex-col overflow-hidden bg-white font-['Open_Sans','Noto_Sans',sans-serif]">
      <TitleBar />
      <TabRow />
      <Ribbon />
      <AddressRow />
      <div className="flex h-[836px] shrink-0">
        <Sidebar />
        <FileList />
      </div>
      <StatusBar />
      <TaskbarEdge />
      <Simulator />
    </div>
  );
}
